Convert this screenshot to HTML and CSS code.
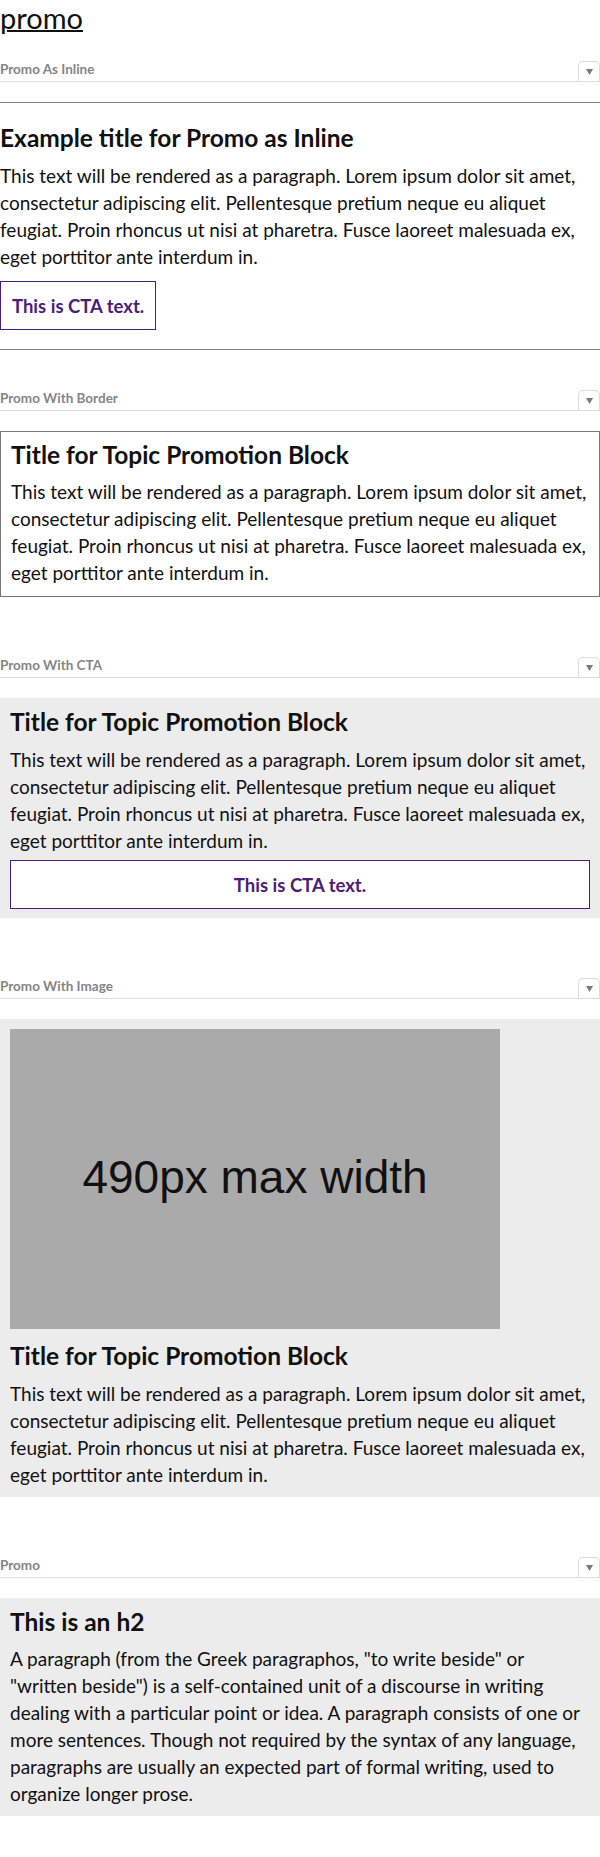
FILE: index.html
```html
<!DOCTYPE html>
<html lang="en">
<head>
<meta charset="utf-8">
<title>promo</title>
<link rel="stylesheet" href="styles.css">
</head>
<body>
  <h1 class="page-title"><a href="#">promo</a></h1>

  <section class="pattern">
    <div class="pattern-head">
      <span class="pattern-name">Promo As Inline</span>
      <span class="pattern-toggle"><svg width="7" height="6" viewBox="0 0 7 6"><path d="M0 0h7L3.5 6z" fill="#7a7a7a"/></svg></span>
    </div>
    <div class="promo promo--inline">
      <h2 class="promo-title">Example title for Promo as Inline</h2>
      <p class="promo-text">This text will be rendered as a paragraph. Lorem ipsum dolor sit amet, consectetur adipiscing elit. Pellentesque pretium neque eu aliquet feugiat. Proin rhoncus ut nisi at pharetra. Fusce laoreet malesuada ex, eget porttitor ante interdum in.</p>
      <a class="cta" href="#">This is CTA text.</a>
    </div>
  </section>

  <section class="pattern">
    <div class="pattern-head">
      <span class="pattern-name">Promo With Border</span>
      <span class="pattern-toggle"><svg width="7" height="6" viewBox="0 0 7 6"><path d="M0 0h7L3.5 6z" fill="#7a7a7a"/></svg></span>
    </div>
    <div class="promo promo--border">
      <h2 class="promo-title">Title for Topic Promotion Block</h2>
      <p class="promo-text">This text will be rendered as a paragraph. Lorem ipsum dolor sit amet, consectetur adipiscing elit. Pellentesque pretium neque eu aliquet feugiat. Proin rhoncus ut nisi at pharetra. Fusce laoreet malesuada ex, eget porttitor ante interdum in.</p>
    </div>
  </section>

  <section class="pattern">
    <div class="pattern-head">
      <span class="pattern-name">Promo With CTA</span>
      <span class="pattern-toggle"><svg width="7" height="6" viewBox="0 0 7 6"><path d="M0 0h7L3.5 6z" fill="#7a7a7a"/></svg></span>
    </div>
    <div class="promo promo--shaded">
      <h2 class="promo-title">Title for Topic Promotion Block</h2>
      <p class="promo-text">This text will be rendered as a paragraph. Lorem ipsum dolor sit amet, consectetur adipiscing elit. Pellentesque pretium neque eu aliquet feugiat. Proin rhoncus ut nisi at pharetra. Fusce laoreet malesuada ex, eget porttitor ante interdum in.</p>
      <a class="cta cta--block" href="#">This is CTA text.</a>
    </div>
  </section>

  <section class="pattern">
    <div class="pattern-head">
      <span class="pattern-name">Promo With Image</span>
      <span class="pattern-toggle"><svg width="7" height="6" viewBox="0 0 7 6"><path d="M0 0h7L3.5 6z" fill="#7a7a7a"/></svg></span>
    </div>
    <div class="promo promo--shaded">
      <div class="promo-image"><span>490px max width</span></div>
      <h2 class="promo-title">Title for Topic Promotion Block</h2>
      <p class="promo-text">This text will be rendered as a paragraph. Lorem ipsum dolor sit amet, consectetur adipiscing elit. Pellentesque pretium neque eu aliquet feugiat. Proin rhoncus ut nisi at pharetra. Fusce laoreet malesuada ex, eget porttitor ante interdum in.</p>
    </div>
  </section>

  <section class="pattern">
    <div class="pattern-head">
      <span class="pattern-name">Promo</span>
      <span class="pattern-toggle"><svg width="7" height="6" viewBox="0 0 7 6"><path d="M0 0h7L3.5 6z" fill="#7a7a7a"/></svg></span>
    </div>
    <div class="promo promo--shaded">
      <h2 class="promo-title promo-title--tight">This is an h2</h2>
      <p class="promo-text">A paragraph (from the Greek paragraphos, "to write beside" or "written beside") is a self-contained unit of a discourse in writing dealing with a particular point or idea. A paragraph consists of one or more sentences. Though not required by the syntax of any language, paragraphs are usually an expected part of formal writing, used to organize longer prose.</p>
    </div>
  </section>
</body>
</html>
```
FILE: styles.css
```css
* { box-sizing: border-box; }

body {
  margin: 0;
  font-family: Lato, "Open Sans", sans-serif;
  color: #111;
  background: #fff;
}

.page-title {
  margin: 0 0 26px;
  padding-top: 1px;
  font-size: 29px;
  line-height: 34px;
  font-weight: 400;
}
.page-title a {
  color: #111;
  text-decoration: underline;
  text-decoration-thickness: 2px;
}

.pattern { padding-bottom: 40px; }

.pattern-head {
  display: flex;
  justify-content: space-between;
  align-items: flex-end;
  border-bottom: 1px solid #dcdcdc;
}

.pattern-name {
  padding-bottom: 4px;
  font-size: 13.5px;
  line-height: 15px;
  font-weight: 700;
  color: #858585;
}

.pattern-toggle {
  display: flex;
  align-items: center;
  justify-content: center;
  width: 22px;
  height: 20px;
  border: 1px solid #dcdcdc;
  border-bottom: 0;
  border-radius: 5px 5px 0 0;
  padding-top: 1px;
}

.promo { margin-top: 20px; }

.promo--inline {
  border-top: 1px solid #808080;
  border-bottom: 1px solid #808080;
  padding: 20px 0 19px;
}
.promo--inline .promo-text { margin-top: 9px; }

.promo--border {
  border: 1px solid #777;
  padding: 8px 10px 10px;
  margin-bottom: 20px;
}

.promo--shaded {
  background: #ececec;
  padding: 9px 10px;
  margin-bottom: 20px;
}

.promo-title {
  margin: 0;
  font-size: 24.5px;
  line-height: 30px;
  font-weight: 700;
  color: #111;
}

.promo-text {
  margin: 9px 0 0;
  font-size: 19px;
  line-height: 27px;
}
.promo--border .promo-text,
.promo-title--tight + .promo-text { margin-top: 8px; }

.cta {
  display: inline-block;
  margin-top: 11px;
  padding: 13px 11px 12px;
  border: 1px solid #4b1d7a;
  background: #fff;
  color: #4b1d7a;
  font-size: 18.5px;
  line-height: 22px;
  font-weight: 700;
  text-decoration: none;
}
.cta--block {
  display: block;
  margin-top: 6px;
  text-align: center;
}

.promo-image {
  display: flex;
  align-items: center;
  justify-content: center;
  max-width: 490px;
  height: 300px;
  margin: 1px 0 12px;
  background: #aaa;
}
.promo-image span {
  font-family: "Liberation Sans", Arial, sans-serif;
  font-size: 46px;
  line-height: 1;
  color: #111;
  padding-bottom: 4px;
}
```
